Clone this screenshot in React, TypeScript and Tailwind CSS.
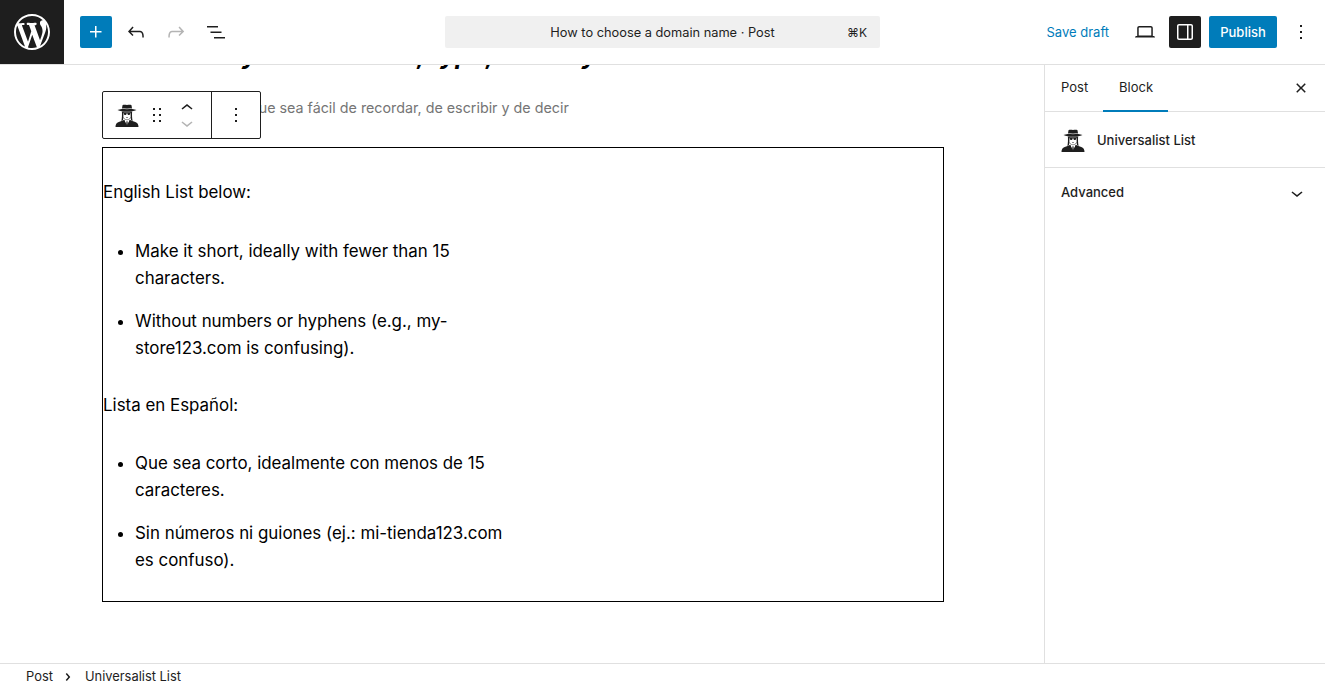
function WpIcon({ d, className = "" }: { d: string; className?: string }) {
  return (
    <svg viewBox="0 0 24 24" width="24" height="24" fill="currentColor" className={className}>
      <path d={d} />
    </svg>
  );
}

function SpyIcon() {
  return (
    <svg viewBox="0 0 24 24" width="24" height="24">
      {/* shoulders and shirt */}
      <path d="M0.500 24c0-2.800 1-4.300 3.200-5l5-1.800h6.600l5 1.800c2.200.7 3.200 2.200 3.200 5z" fill="#1e1e1e" />
      <path d="M9.200 16.800l2.800 6.200 2.800-6.200-1-1h-3.600z" fill="#fff" />
      <path d="M11.500 18.200h1l.5 5.800h-2z" fill="#1e1e1e" />
      <path d="M9.200 16.800l2.300 5.500-.3 1.700-3-6.400zM14.800 16.800l-2.300 5.500.3 1.700 3-6.400z" fill="#1e1e1e" />
      {/* hair */}
      <path d="M6.900 8.500h1.400v6.500l-.4 2.300-1.500.6c.6-2.500.7-6 .5-9.400zM17.100 8.500h-1.400v6.500l.4 2.300 1.500.6c-.6-2.500-.7-6-.5-9.400z" fill="#1e1e1e" />
      {/* face */}
      <path d="M8.200 8.500h7.600v5c0 1.900-2 3.300-3.800 3.300s-3.800-1.400-3.800-3.300z" fill="#fff" stroke="#1e1e1e" strokeWidth="0.5" />
      {/* hat */}
      <path d="M7.500 2.200c1.500-.7 3-.2 4.500-.2s3-.5 4.500.2l.6 3.700c1.800.2 3.300.5 4.400 1.200-2.600 1.100-5.700 1.500-9.500 1.500s-6.900-.4-9.500-1.500c1.100-.7 2.600-1 4.400-1.200z" fill="#1e1e1e" />
      <path d="M7.100 5c3.200.6 6.600.6 9.800 0l.1.700c-3.300.6-6.700.6-10 0z" fill="#fff" opacity="0.75" />
      {/* glasses */}
      <path d="M8 9.300h8v.8h-.6c-.1 1.400-.8 2-1.600 2s-1.500-.6-1.600-2h-.4c-.1 1.400-.8 2-1.600 2s-1.500-.6-1.600-2H8z" fill="#1e1e1e" />
      <path d="M11 14.500h2" stroke="#1e1e1e" strokeWidth="0.5" />
    </svg>
  );
}

const icons = {
  plus: "M11 12.5V17.5H12.5V12.5H17.5V11H12.5V6H11V11H6V12.5H11Z",
  undo: "M18.3 11.7c-.6-.6-1.4-.9-2.3-.9H6.7l2.9-3.3-1.1-1-4.5 5L8.5 16l1-1-2.7-2.7H16c.5 0 .9.2 1.3.5 1 1 1 3.4 1 4.5v.3h1.5v-.2c0-1.5 0-4.3-1.5-5.7z",
  redo: "M15.6 6.5l-1.1 1 2.9 3.3H8c-.9 0-1.7.3-2.3.9-1.4 1.5-1.4 4.2-1.4 5.6v.2h1.5v-.3c0-1.1 0-3.5 1-4.5.3-.3.7-.5 1.3-.5h9.2L14.5 15l1.1 1.1 4.6-4.6-4.6-5z",
  list: "M3 6h11v1.500H3V6Zm3.500 5.500h11V13h-11v-1.500ZM21 17H10v1.500h11V17Z",
  desktop: "M20.500 16h-.7V8c0-1.100-.9-2-2-2H6.200c-1.100 0-2 .9-2 2v8h-.7c-.8 0-1.500.7-1.500 1.500h20c0-.8-.7-1.500-1.500-1.500zM5.700 8c0-.3.2-.5.5-.5h11.600c.3 0 .5.2.5.5v7.600H5.700V8z",
  drawer: "M18 4H6c-1.100 0-2 .9-2 2v12c0 1.100.9 2 2 2h12c1.100 0 2-.9 2-2V6c0-1.100-.9-2-2-2zm-4 14.500H6c-.3 0-.5-.2-.5-.5V6c0-.3.2-.5.5-.5h8v13zm4.500-.5c0 .3-.2.5-.5.5h-2.500v-13H18c.3 0 .5.2.5.5v12z",
  more: "M13 19h-2v-2h2v2zm0-6h-2v-2h2v2zm0-6h-2V5h2v2z",
  close: "M12 13.060l3.712 3.713 1.061-1.060L13.061 12l3.712-3.712-1.060-1.060L12 10.938 8.288 7.227l-1.061 1.060L10.939 12l-3.712 3.712 1.060 1.061L12 13.061z",
  chevronDown: "M17.500 11.600L12 16l-5.500-4.400.9-1.200L12 14l4.500-3.600 1 1.200z",
  chevronRight: "M10.862 8.040L14.280 12.029L10.862 16.017L9.723 15.040L12.305 12.029L9.723 9.017L10.862 8.040Z",
  drag: "M8 7h2V5H8v2zm0 6h2v-2H8v2zm0 6h2v-2H8v2zm6-14v2h2V5h-2zm0 8h2v-2h-2v2zm0 6h2v-2h-2v2z",
  up: "M6.500 12.400L12 8l5.500 4.400-.9 1.200L12 10l-4.500 3.600-1-1.200z",
  wp: "M20 10c0-5.510-4.490-10-10-10C4.480 0 0 4.490 0 10c0 5.520 4.480 10 10 10 5.510 0 10-4.480 10-10zM7.780 15.370L4.370 6.220c.55-.02 1.170-.08 1.170-.08.5-.06.44-1.130-.06-1.110 0 0-1.450.11-2.370.11-.18 0-.37 0-.58-.01C4.120 2.690 6.870 1.110 10 1.110c2.330 0 4.450.87 6.050 2.340-.68-.11-1.650.39-1.650 1.580 0 .74.45 1.360.9 2.100.35.61.55 1.360.55 2.460 0 1.490-1.400 5-1.400 5l-3.030-8.370c.54-.02.82-.17.82-.17.5-.05.44-1.250-.06-1.220 0 0-1.440.12-2.380.12-.87 0-2.330-.12-2.330-.12-.5-.03-.56 1.200-.06 1.220l.92.08 1.260 3.410zM17.410 10c.24-.64.74-1.870.43-4.250.7 1.290 1.050 2.710 1.050 4.250 0 3.290-1.730 6.240-4.400 7.780.97-2.590 1.940-5.200 2.920-7.780zM6.100 18.090C3.120 16.650 1.110 13.530 1.110 10c0-1.300.23-2.480.72-3.590C3.250 10.300 4.670 14.200 6.100 18.090zm4.030-6.630l2.580 6.980c-.86.29-1.760.45-2.710.45-.79 0-1.570-.11-2.290-.33.81-2.380 1.620-4.740 2.420-7.100z",
};

function Header() {
  return (
    <header className="grid h-[65px] shrink-0 grid-cols-[1fr_435px_1fr] items-center border-b border-[#e0e0e0]">
      <div className="flex items-center">
        <div className="flex h-16 w-16 items-center justify-center bg-[#1e1e1e]">
          <svg viewBox="0 0 20 20" width="36" height="36" fill="#fff">
            <path d={icons.wp} />
          </svg>
        </div>
        <button className="ml-4 flex h-8 w-8 items-center justify-center rounded-[2px] bg-[#007cba] text-white">
          <WpIcon d={icons.plus} />
        </button>
        <button className="ml-2 flex h-8 w-8 items-center justify-center text-[#1e1e1e]">
          <WpIcon d={icons.undo} />
        </button>
        <button className="ml-2 flex h-8 w-8 items-center justify-center text-[#b4b4b4]">
          <WpIcon d={icons.redo} />
        </button>
        <button className="ml-2 flex h-8 w-8 items-center justify-center text-[#1e1e1e]">
          <WpIcon d={icons.list} />
        </button>
      </div>
      <div className="relative flex h-8 items-center justify-center rounded-[2px] bg-[#f0f0f0] pt-[2px] text-[12.8px] text-[#1e1e1e]">
        <span>How to choose a domain name · Post</span>
        <span className="absolute right-[13px] text-xs">⌘K</span>
      </div>
      <div className="flex items-center justify-end pr-2">
        <span className="mt-[2px] text-[#007cba]">Save draft</span>
        <button className="ml-5 flex h-8 w-8 items-center justify-center text-[#1e1e1e]">
          <WpIcon d={icons.desktop} />
        </button>
        <button className="ml-2 flex h-8 w-8 items-center justify-center rounded-[2px] bg-[#1e1e1e] text-white">
          <WpIcon d={icons.drawer} />
        </button>
        <button className="ml-2 flex h-8 w-[68px] items-center justify-center rounded-[2px] bg-[#007cba] pt-[2px] font-medium text-white">
          Publish
        </button>
        <button className="ml-2 flex h-8 w-8 items-center justify-center text-[#1e1e1e]">
          <WpIcon d={icons.more} />
        </button>
      </div>
    </header>
  );
}

function BlockToolbar() {
  return (
    <div className="absolute left-[102px] top-[26px] flex h-12 w-[159px] rounded-[2px] border border-[#1e1e1e] bg-white text-[#1e1e1e]">
      <div className="flex w-[109px] items-center border-r border-[#1e1e1e] pl-3">
        <SpyIcon />
        <WpIcon d={icons.drag} className="ml-[6px]" />
        <div className="ml-[6px] flex flex-col">
          <WpIcon d={icons.up} className="-mb-2" />
          <WpIcon d={icons.chevronDown} className="-mt-[1px] text-[#b4b4b4]" />
        </div>
      </div>
      <div className="flex flex-1 items-center justify-center">
        <WpIcon d={icons.more} />
      </div>
    </div>
  );
}

function Canvas() {
  return (
    <main className="relative flex-1 overflow-hidden">
      <h1 className="-mt-[26px] ml-[102px] whitespace-nowrap text-[25px] font-bold italic leading-8 text-black">
        Make it easy to remember, type, and say
      </h1>
      <p className="ml-[102px] mt-[25px] text-[14.3px] leading-6 text-[#757575]">
        Elige un dominio web que sea fácil de recordar, de escribir y de decir
      </p>
      <BlockToolbar />
      <section className="ml-[102px] mt-[27px] h-[455px] w-[842px] border border-black pt-[31px] text-[16.9px] leading-[27px] text-black">
        <p>English List below:</p>
        <ul className="mt-8 w-[402px] list-disc pl-8">
          <li>Make it short, ideally with fewer than 15 characters.</li>
          <li className="mt-4">Without numbers or hyphens (e.g., my-store123.com is confusing).</li>
        </ul>
        <p className="mt-[30px]">Lista en Español:</p>
        <ul className="mt-[31px] w-[402px] list-disc pl-8">
          <li>Que sea corto, idealmente con menos de 15 caracteres.</li>
          <li className="mt-4">Sin números ni guiones (ej.: mi-tienda123.com es confuso).</li>
        </ul>
      </section>
    </main>
  );
}

function Sidebar() {
  return (
    <aside className="w-[281px] shrink-0 border-l border-[#e0e0e0] text-[#1e1e1e]">
      <div className="flex h-[47px] items-stretch border-b border-[#e0e0e0]">
        <div className="flex w-[58px] items-center pl-4">Post</div>
        <div className="relative flex w-[65px] items-center pl-4">
          Block
          <span className="absolute inset-x-0 -bottom-px h-[2px] bg-[#007cba]" />
        </div>
        <button className="ml-auto flex w-12 items-center justify-center">
          <WpIcon d={icons.close} />
        </button>
      </div>
      <div className="flex h-[56px] items-center border-b border-[#e0e0e0] px-4">
        <SpyIcon />
        <span className="ml-3 mt-[2px] font-medium">Universalist List</span>
      </div>
      <div className="flex h-[49px] items-center justify-between pl-4 pr-4">
        <span className="font-medium">Advanced</span>
        <WpIcon d={icons.chevronDown} />
      </div>
    </aside>
  );
}

export default function App() {
  return (
    <div className="flex h-screen flex-col overflow-hidden bg-white font-['Inter',sans-serif] text-[13px]">
      <Header />
      <div className="flex min-h-0 flex-1">
        <Canvas />
        <Sidebar />
      </div>
      <footer className="flex h-[25px] shrink-0 items-center border-t border-[#e0e0e0] pl-[26px] pt-px text-[12.9px] text-[#1e1e1e]">
        <span>Post</span>
        <WpIcon d={icons.chevronRight} className="ml-[3px] mr-[3px]" />
        <span className="ml-[2px]">Universalist List</span>
      </footer>
    </div>
  );
}
